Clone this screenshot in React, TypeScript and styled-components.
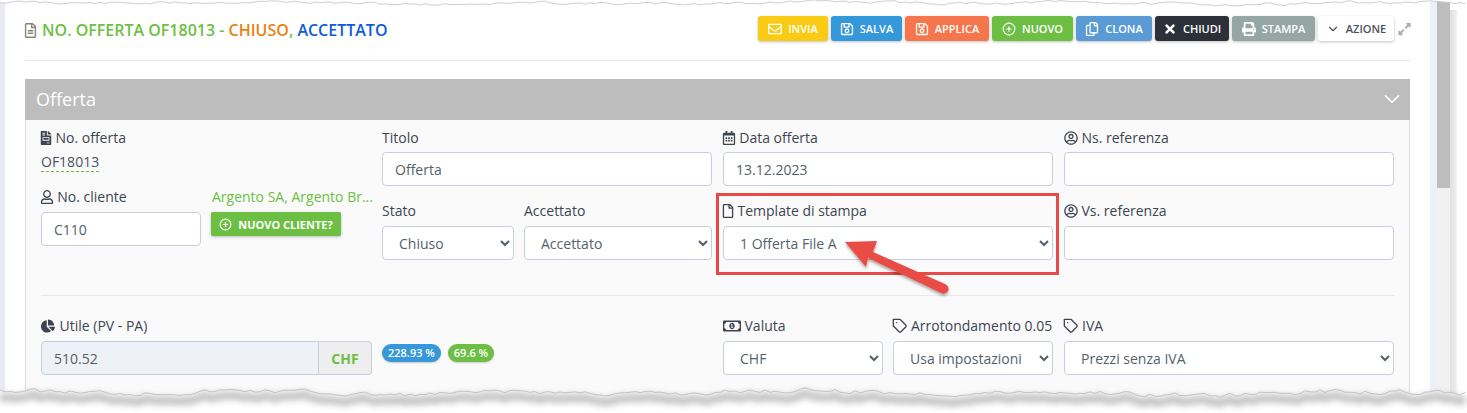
import React from "react";
import styled, { createGlobalStyle } from "styled-components";
import {
  FaRegFileAlt,
  FaFileInvoice,
  FaRegUser,
  FaRegEnvelope,
  FaRegSave,
  FaRegCopy,
  FaTimes,
  FaPrint,
  FaExpandAlt,
  FaRegCalendarAlt,
  FaRegUserCircle,
  FaRegFile,
  FaChartPie,
  FaRegMoneyBillAlt,
} from "react-icons/fa";
import { FiTag, FiPlusCircle, FiChevronDown } from "react-icons/fi";

const GREEN = "#6cbf43";

const GlobalStyle = createGlobalStyle`
  html, body {
    margin: 0;
    padding: 0;
    background: #fff;
  }
  body {
    font-family: "Open Sans", "Liberation Sans", sans-serif;
    font-size: 14px;
    color: #3d4551;
  }
`;

// deterministic jagged line for the torn screenshot edges
function tornLine(base: number, amp: number, seed: number) {
  const pts: string[] = [];
  let r = seed;
  let lump = 0;
  for (let x = 0; x <= 1467; x += 5) {
    r = (r * 9301 + 49297) % 233280;
    const noise = (r / 233280 - 0.5) * amp * 0.8;
    lump = lump * 0.72 + noise * 0.9;
    const wave = Math.sin(x / 43 + seed) * amp * 0.35 + Math.sin(x / 113 + seed * 2) * amp * 0.3;
    pts.push(`${x},${(base + wave + lump + noise * 0.4).toFixed(1)}`);
  }
  return pts;
}

function App() {
  const top = tornLine(3, 2.4, 11);
  const bottom = tornLine(392.5, 4, 5);

  return (
    <Screen>
      <GlobalStyle />
      <LeftStrip />
      <Main>
        <Header>
          <Title>
            <TitleIcon>
              <FaRegFileAlt />
            </TitleIcon>
            NO. OFFERTA OF18013 - <Orange>CHIUSO</Orange>, <Blue>ACCETTATO</Blue>
          </Title>
          <Toolbar>
            <ActionButton $bg="#f9cb14" $w={70}>
              <FaRegEnvelope /> INVIA
            </ActionButton>
            <ActionButton $bg="#3498db" $w={71}>
              <FaRegSave /> SALVA
            </ActionButton>
            <ActionButton $bg="#f5764c" $w={84}>
              <FaRegSave /> APPLICA
            </ActionButton>
            <ActionButton $bg={GREEN} $w={81}>
              <FiPlusCircle /> NUOVO
            </ActionButton>
            <ActionButton $bg="#5b9bd5" $w={76}>
              <FaRegCopy /> CLONA
            </ActionButton>
            <ActionButton $bg="#2c3038" $w={74}>
              <FaTimes /> CHIUDI
            </ActionButton>
            <ActionButton $bg="#96a6a5" $w={83}>
              <FaPrint /> STAMPA
            </ActionButton>
            <ActionButton $bg="#fff" $fg="#4a5260" $w={76}>
              <FiChevronDown /> AZIONE
            </ActionButton>
            <ExpandIcon>
              <FaExpandAlt />
            </ExpandIcon>
          </Toolbar>
        </Header>
        <Divider />
        <Panel>
          <PanelHead>
            Offerta
            <FiChevronDown />
          </PanelHead>
          <PanelBody>
            <Columns>
              <Stack>
                <Field>
                  <TopLabel>
                    <LabelIcon $w={10.5}>
                      <FaFileInvoice />
                    </LabelIcon>
                    No. offerta
                  </TopLabel>
                  <DocNumber>OF18013</DocNumber>
                </Field>
                <Pair>
                  <Field>
                    <Label>
                      <LabelIcon $w={12.25}>
                        <FaRegUser />
                      </LabelIcon>
                      No. cliente
                    </Label>
                    <TextInput defaultValue="C110" />
                  </Field>
                  <Field>
                    <CustomerName>Argento SA, Argento Br...</CustomerName>
                    <NewCustomer>
                      <FiPlusCircle /> NUOVO CLIENTE?
                    </NewCustomer>
                  </Field>
                </Pair>
              </Stack>
              <Stack>
                <Field>
                  <TopLabel>Titolo</TopLabel>
                  <TextInput defaultValue="Offerta" />
                </Field>
                <StateRow>
                  <Field>
                    <Label>Stato</Label>
                    <Select defaultValue="Chiuso">
                      <option>Chiuso</option>
                    </Select>
                  </Field>
                  <Field>
                    <Label>Accettato</Label>
                    <Select defaultValue="Accettato">
                      <option>Accettato</option>
                    </Select>
                  </Field>
                </StateRow>
              </Stack>
              <Stack>
                <Field>
                  <TopLabel>
                    <LabelIcon $w={12.25}>
                      <FaRegCalendarAlt />
                    </LabelIcon>
                    Data offerta
                  </TopLabel>
                  <TextInput defaultValue="13.12.2023" />
                </Field>
                <Field>
                  <Label>
                    <LabelIcon $w={10.5}>
                      <FaRegFile />
                    </LabelIcon>
                    Template di stampa
                  </Label>
                  <Select defaultValue="1 Offerta File A">
                    <option>1 Offerta File A</option>
                  </Select>
                </Field>
              </Stack>
              <Stack>
                <Field>
                  <TopLabel>
                    <LabelIcon $w={13.5}>
                      <FaRegUserCircle />
                    </LabelIcon>
                    Ns. referenza
                  </TopLabel>
                  <TextInput />
                </Field>
                <Field>
                  <Label>
                    <LabelIcon $w={13.5}>
                      <FaRegUserCircle />
                    </LabelIcon>
                    Vs. referenza
                  </Label>
                  <TextInput />
                </Field>
              </Stack>
            </Columns>
            <BodyRule />
            <Columns>
              <Field>
                <Label>
                  <LabelIcon $w={14.5}>
                    <FaChartPie />
                  </LabelIcon>
                  Utile (PV - PA)
                </Label>
                <InputGroup>
                  <ReadOnlyInput readOnly defaultValue="510.52" />
                  <Addon>CHF</Addon>
                </InputGroup>
              </Field>
              <Badges>
                <Badge $bg="#3498db">228.93 %</Badge>
                <Badge $bg={GREEN}>69.6 %</Badge>
              </Badges>
              <Pair>
                <Field>
                  <Label>
                    <LabelIcon $w={17.5}>
                      <MoneyIcon />
                    </LabelIcon>
                    Valuta
                  </Label>
                  <Select defaultValue="CHF">
                    <option>CHF</option>
                  </Select>
                </Field>
                <Field>
                  <Label>
                    <LabelIcon $w={14}>
                      <TagIcon />
                    </LabelIcon>
                    Arrotondamento 0.05
                  </Label>
                  <Select defaultValue="Usa impostazioni">
                    <option>Usa impostazioni</option>
                  </Select>
                </Field>
              </Pair>
              <Field>
                <Label>
                  <LabelIcon $w={14}>
                    <TagIcon />
                  </LabelIcon>
                  IVA
                </Label>
                <Select defaultValue="Prezzi senza IVA">
                  <option>Prezzi senza IVA</option>
                </Select>
              </Field>
            </Columns>
          </PanelBody>
        </Panel>
      </Main>
      <Gutter />
      <ScrollTrack>
        <ScrollThumb />
      </ScrollTrack>
      <RightShadow />

      <Highlight />
      <Overlay viewBox="0 0 1467 413">
        <defs>
          <filter id="soft" x="-5%" y="-100%" width="110%" height="300%">
            <feGaussianBlur stdDeviation="3" />
          </filter>
          <filter id="arrowShadow" x="-20%" y="-20%" width="140%" height="140%">
            <feDropShadow dx="0" dy="2" stdDeviation="1.5" floodColor="#000" floodOpacity="0.35" />
          </filter>
        </defs>
        <path d={`M0,0 L${top.join(" L")} L1467,0 Z`} fill="#fff" />
        <path d={`M${top.join(" L")}`} fill="none" stroke="#cfcfcf" strokeWidth="1" />
        <path d={`M0,413 L${bottom.join(" L")} L1467,413 Z`} fill="#fff" />
        <path
          d={`M${bottom.join(" L")}`}
          fill="none"
          stroke="#8f8f8f"
          strokeWidth="8"
          opacity="0.55"
          filter="url(#soft)"
          transform="translate(0 6)"
        />
        <path d={`M${bottom.join(" L")}`} fill="none" stroke="#c4c4c4" strokeWidth="1" />
        <path
          d="M845 242 L877 241 L873 252 L945 284 Q950 287 948 291 Q945 295 941 293 L868 258 L866 267 Z"
          fill="#e94b45"
          filter="url(#arrowShadow)"
        />
      </Overlay>
    </Screen>
  );
}

export default App;

const Screen = styled.div`
  position: relative;
  width: 1467px;
  height: 413px;
  overflow: hidden;
  display: flex;
  background: #fff;
`;

const LeftStrip = styled.div`
  width: 5px;
  flex: none;
  background: #e8ebf3;
`;

const Main = styled.div`
  width: 1425px;
  flex: none;
  box-sizing: border-box;
  padding: 0 20px;
  background: #fff;
`;

const Gutter = styled.div`
  width: 7px;
  flex: none;
  background: #edf0f6;
`;

const ScrollTrack = styled.div`
  width: 13px;
  flex: none;
  background: #f1f1f1;
`;

const ScrollThumb = styled.div`
  height: 188px;
  background: #bdbdbd;
`;

const RightShadow = styled.div`
  width: 8px;
  flex: none;
  margin-top: 10px;
  background: linear-gradient(to right, #e0e0e0, #ececec 70%, #fff);
`;

const Header = styled.div`
  height: 60px;
  display: flex;
  justify-content: space-between;
  align-items: flex-start;
`;

const Title = styled.h1`
  margin: 19px 0 0;
  display: flex;
  align-items: center;
  white-space: pre;
  font-size: 16px;
  line-height: 22px;
  font-weight: 600;
  color: ${GREEN};
`;

const TitleIcon = styled.span`
  display: flex;
  margin: 0 4px 0 -2px;
  font-size: 15px;
  color: #8a8378;
`;

const Orange = styled.span`
  color: #e8830f;
`;

const Blue = styled.span`
  color: #0d5bdd;
`;

const Toolbar = styled.div`
  display: flex;
  gap: 3px;
  margin: 16px -1px 0 0;
`;

const ActionButton = styled.button<{ $bg: string; $fg?: string; $w: number }>`
  height: 25px;
  width: ${(p) => p.$w}px;
  padding: 0;
  border: 0;
  border-radius: 3px;
  display: flex;
  align-items: center;
  justify-content: center;
  gap: 6px;
  background: ${(p) => p.$bg};
  color: ${(p) => p.$fg || "#fff"};
  font-family: inherit;
  font-size: 11px;
  font-weight: 600;
  box-shadow: 0 1px 3px rgba(0, 0, 0, 0.25);

  svg {
    font-size: 14px;
    flex: none;
  }
`;

const ExpandIcon = styled.span`
  display: flex;
  align-items: center;
  margin-left: 1px;
  width: 13px;
  font-size: 14px;
  color: #a9adb3;
`;

const Divider = styled.div`
  height: 1px;
  background: #e8e8e8;
  margin-bottom: 18px;
`;

const Panel = styled.section`
  border: 1px solid #dedede;
  border-top: 0;
  border-radius: 2px 2px 0 0;
  background: #fafafa;
`;

const PanelHead = styled.div`
  height: 41px;
  margin: 0 -1px;
  padding: 0 5px 2px 11px;
  box-sizing: border-box;
  display: flex;
  align-items: center;
  justify-content: space-between;
  background: #bdbdbd;
  color: #fff;
  font-size: 18px;

  svg {
    font-size: 26px;
    stroke-width: 1.5;
  }
`;

const PanelBody = styled.div`
  padding: 8px 15px 30px;
`;

const Columns = styled.div`
  display: grid;
  grid-template-columns: repeat(4, 330px);
  column-gap: 11px;
`;

const Stack = styled.div`
  display: flex;
  flex-direction: column;
  gap: 15px;
`;

const Pair = styled.div`
  display: grid;
  grid-template-columns: 160px 160px;
  column-gap: 10px;
`;

const StateRow = styled.div`
  display: grid;
  grid-template-columns: 132px 188px;
  column-gap: 10px;
`;

const Field = styled.div`
  min-width: 0;
  display: flex;
  flex-direction: column;
`;

const Label = styled.label`
  height: 20px;
  margin-bottom: 5px;
  display: flex;
  align-items: center;
  gap: 4px;
  white-space: nowrap;
  font-size: 14px;
  line-height: 20px;
`;

const TopLabel = styled(Label)`
  margin-bottom: 4px;
`;

const LabelIcon = styled.span<{ $w: number }>`
  width: ${(p) => p.$w}px;
  flex: none;
  display: flex;
  justify-content: center;
  font-size: 14px;

  svg {
    flex: none;
  }
`;

const TagIcon = styled(FiTag)`
  font-size: 16px;
`;

const MoneyIcon = styled(FaRegMoneyBillAlt)`
  font-size: 18px;
`;

const DocNumber = styled.span`
  align-self: flex-start;
  border-bottom: 1px dashed ${GREEN};
  line-height: 19px;
  color: #4a5260;
`;

const CustomerName = styled.div`
  height: 20px;
  margin: 0 -2px 5px 1px;
  line-height: 20px;
  color: ${GREEN};
  white-space: nowrap;
`;

const NewCustomer = styled.button`
  width: 130px;
  height: 24px;
  padding: 0;
  border: 0;
  border-radius: 2px;
  display: flex;
  align-items: center;
  justify-content: center;
  gap: 6px;
  background: ${GREEN};
  color: #fff;
  font-family: inherit;
  font-size: 11px;
  font-weight: 700;
  box-shadow: 0 1px 3px rgba(0, 0, 0, 0.25);

  svg {
    font-size: 13px;
  }
`;

const TextInput = styled.input`
  width: 100%;
  height: 34px;
  box-sizing: border-box;
  padding: 0 12px;
  border: 1px solid #c5cfe0;
  border-radius: 4px;
  background: #fff;
  color: #555f6b;
  font-family: inherit;
  font-size: 14px;
`;

const Select = styled.select`
  width: 100%;
  height: 34px;
  box-sizing: border-box;
  padding: 0 12px;
  border: 1px solid #c5cfe0;
  border-radius: 4px;
  background: #fff;
  color: #555f6b;
  font-family: inherit;
  font-size: 14px;
`;

const BodyRule = styled.div`
  height: 1px;
  margin: 35px 0 20px;
  background: #e8e8e8;
`;

const InputGroup = styled.div`
  display: flex;
  width: 331px;
  height: 34px;
`;

const ReadOnlyInput = styled(TextInput)`
  flex: 1;
  min-width: 0;
  border-radius: 4px 0 0 4px;
  background: #eef1f6;
`;

const Addon = styled.span`
  width: 53px;
  flex: none;
  box-sizing: border-box;
  display: flex;
  align-items: center;
  justify-content: center;
  border: 1px solid #c5cfe0;
  border-left: 0;
  border-radius: 0 4px 4px 0;
  background: #eeeeee;
  color: ${GREEN};
  font-weight: 700;
`;

const Badges = styled.div`
  display: flex;
  align-items: flex-start;
  gap: 7px;
  padding-top: 28px;
`;

const Badge = styled.span<{ $bg: string }>`
  height: 18px;
  padding: 0 6px;
  border-radius: 9px;
  background: ${(p) => p.$bg};
  color: #fff;
  font-size: 11px;
  font-weight: 600;
  line-height: 18px;
  box-shadow: 0 1px 2px rgba(0, 0, 0, 0.2);
`;

const Highlight = styled.div`
  position: absolute;
  left: 716px;
  top: 193px;
  width: 343px;
  height: 82px;
  box-sizing: border-box;
  border: 3px solid #e84b45;
`;

const Overlay = styled.svg`
  position: absolute;
  left: 0;
  top: 0;
  width: 1467px;
  height: 413px;
  pointer-events: none;
`;
